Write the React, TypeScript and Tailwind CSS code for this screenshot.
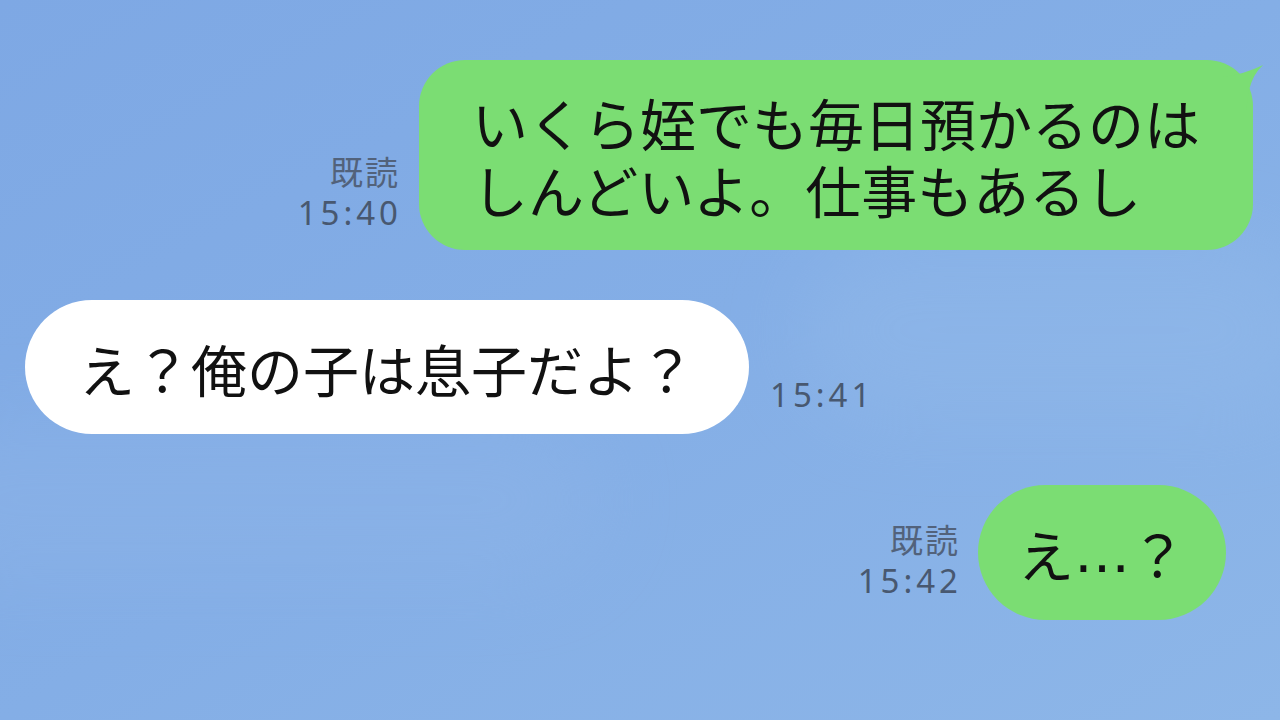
import React from "react";

const jp = { fontFamily: '"Noto Sans CJK JP", "Noto Sans", sans-serif' } as React.CSSProperties;

function Meta({ read, time }: { read?: boolean; time: string }) {
  return (
    <div className="flex flex-col items-end">
      {read && (
        <div className="text-[33px] leading-[36px] mb-[4px] tracking-[2px] mr-[-2px] text-[#52627b]" style={jp}>
          既読
        </div>
      )}
      <div
        className="text-[33px] leading-[40px] tracking-[4px] mr-[-4px] text-[#485870]"
        style={{ fontFamily: '"Noto Sans", "Liberation Sans", sans-serif' }}
      >
        {time}
      </div>
    </div>
  );
}

export default function App() {
  return (
    <div
      className="w-[1280px] h-[720px] overflow-hidden relative bg-gradient-to-br from-[#7ea8e4] via-[#84aee6] to-[#8db6e8] text-[#111111]"
      style={jp}
    >
      <div className="absolute left-[-100px] top-[420px] w-[700px] h-[160px] rounded-full bg-[#8fb5e8] opacity-40 blur-2xl" />
      <div className="absolute left-[800px] top-[240px] w-[520px] h-[180px] rounded-full bg-[#94bbea] opacity-40 blur-2xl" />
      <div className="relative flex flex-col pt-[60px]">
        <div className="flex justify-end items-end pr-[27px] gap-[21px]">
          <div className="mb-[17px]">
            <Meta read time="15:40" />
          </div>
          <div className="relative bg-[#7bdd73] rounded-[46px] px-[53px] py-[28px] text-[56px] leading-[67px]">
            いくら姪でも毎日預かるのは
            <br />
            しんどいよ。仕事もあるし
            <svg
              className="absolute right-[-12px] top-0"
              width="50"
              height="50"
              viewBox="0 0 50 50"
            >
              <path d="M8,17 Q30,14 48,5 Q38,14 34,30 L31,50 L8,50 Z" fill="#7bdd73" />
            </svg>
          </div>
        </div>

        <div className="flex items-end pl-[25px] gap-[21px] mt-[50px]">
          <div className="bg-white rounded-full h-[134px] px-[54px] flex items-center text-[56px] leading-[67px]">
            え？俺の子は息子だよ？
          </div>
          <div className="mb-[19px]">
            <Meta time="15:41" />
          </div>
        </div>

        <div className="flex justify-end items-end pr-[54px] gap-[20px] mt-[51px]">
          <div className="mb-[19px]">
            <Meta read time="15:42" />
          </div>
          <div className="bg-[#7bdd73] rounded-full h-[135px] px-[40px] flex items-center text-[56px] leading-[67px]">
            え<span style={{ fontFamily: '"DejaVu Sans", sans-serif' }}>…</span>？
          </div>
        </div>
      </div>
    </div>
  );
}
